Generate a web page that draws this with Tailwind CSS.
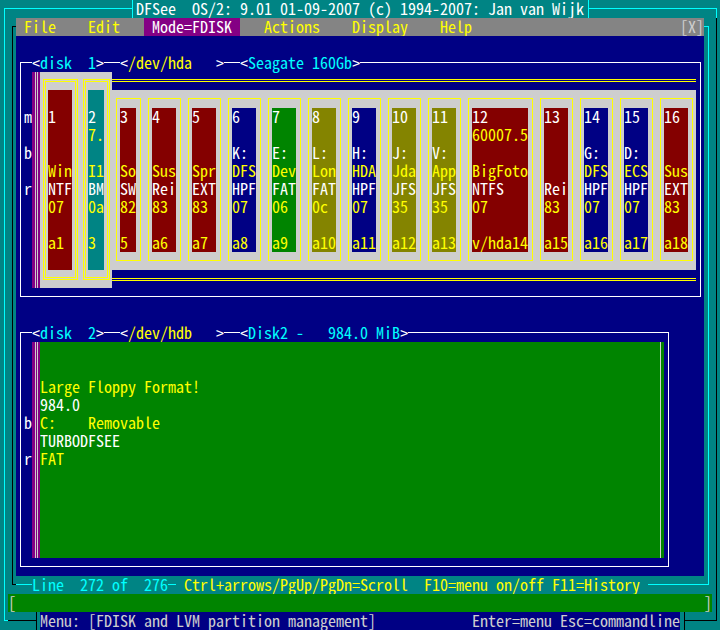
<!DOCTYPE html>
<html lang="en">
<head>
    <meta charset="UTF-8">
    <meta name="viewport" content="width=device-width, initial-scale=1.0">
    <title>DFSee OS/2</title>
    <script src="https://cdn.jsdelivr.net/npm/@tailwindcss/browser@4"></script>
</head>
<body class="min-h-screen flex flex-col bg-[#008484] text-white text-base leading-4 font-['Noto_Sans_Mono_CJK_SC','Liberation_Mono',monospace]">

    <!-- Title bar -->
    <header class="flex h-[18px] ml-1 mr-[3px]">
        <div class="flex-1 mt-2 border-t border-l border-[#00ffff]"></div>
        <h1 class="border-x border-[#00ffff] pl-[3px] pr-1 whitespace-pre">DFSee  OS/2: 9.01 01-09-2007 (c) 1994-2007: Jan van Wijk</h1>
        <div class="flex-1 mt-2 border-t border-r border-[#00ffff]"></div>
    </header>

    <div class="flex-1 flex flex-col ml-1 mr-[3px] border-l border-l-[#00ffff] border-r border-r-black">
        <div class="flex-1 flex px-[7px]">
            <div class="w-1 mt-2 border-t border-l border-black"></div>

            <div class="flex-1 flex flex-col min-w-0">
                <nav class="flex gap-4 bg-[#848484] text-[#ffff00]">
                    <button class="px-2 pb-[2px]">File</button>
                    <button class="px-2 pb-[2px]">Edit</button>
                    <button class="px-2 pb-[2px] bg-[#840084] text-white">Mode=FDISK</button>
                    <button class="px-2 pb-[2px]">Actions</button>
                    <button class="px-2 pb-[2px]">Display</button>
                    <button class="px-2 pb-[2px]">Help</button>
                    <button class="ml-auto pb-[2px] text-[#cecece]" aria-label="Close">[X]</button>
                </nav>

                <main class="flex-1 flex flex-col gap-[27px] bg-[#000084] pt-[18px] pb-[9px] pl-1 pr-[3px]">
                    <!-- Disk 1 -->
                    <section>
                        <div class="flex h-[18px] whitespace-pre">
                            <div class="w-3 mt-2 border-t border-l border-white"></div>
                            <h2>&lt;<span class="text-[#00ffff]">disk  1</span>&gt;</h2>
                            <div class="w-4 mt-2 border-t border-white"></div>
                            <p>&lt;<span class="text-[#ffff00]">/dev/hda   </span>&gt;</p>
                            <div class="w-4 mt-2 border-t border-white"></div>
                            <p>&lt;<span class="text-[#00ffff]">Seagate 160Gb</span>&gt;</p>
                            <div class="flex-1 mt-2 border-t border-r border-white"></div>
                        </div>
                        <div class="flex border-x border-b border-white pl-[3px] pr-1 pb-2">
                            <div class="w-2 pt-9 grid auto-rows-[18px] content-start"><span>m</span><span></span><span>b</span><span></span><span>r</span></div>
                            <div class="w-2 flex bg-[#840084] pl-[3px]"><div class="w-[3px] border-x border-[#cecece]"></div></div>
                            <div id="primary" class="flex gap-[5px] bg-[#cecece] pl-[3px] pr-[2px] pt-[7px] pb-2"></div>
                            <div class="flex-1 flex flex-col justify-between py-[7px]">
                                <div class="h-[3px] border-y border-[#ffff00]"></div>
                                <div id="logical" class="flex gap-[7px] bg-[#cecece] pl-1 pr-[3px] pt-2 pb-[9px]"></div>
                                <div class="h-[3px] border-y border-[#ffff00]"></div>
                            </div>
                        </div>
                    </section>

                    <!-- Disk 2 -->
                    <section class="mr-8">
                        <div class="flex h-[18px] whitespace-pre">
                            <div class="w-3 mt-2 border-t border-l border-white"></div>
                            <h2>&lt;<span class="text-[#00ffff]">disk  2</span>&gt;</h2>
                            <div class="w-4 mt-2 border-t border-white"></div>
                            <p>&lt;<span class="text-[#ffff00]">/dev/hdb   </span>&gt;</p>
                            <div class="w-4 mt-2 border-t border-white"></div>
                            <p>&lt;<span class="text-[#00ffff]">Disk2 -   984.0 MiB</span>&gt;</p>
                            <div class="flex-1 mt-2 border-t border-r border-white"></div>
                        </div>
                        <div class="flex border-x border-b border-white pl-[3px] pr-1 pb-2">
                            <div class="w-2 pt-[72px] grid auto-rows-[18px] content-start"><span>b</span><span></span><span>r</span></div>
                            <div class="w-2 flex bg-[#840084] pl-[3px]"><div class="w-[3px] border-x border-[#cecece]"></div></div>
                            <div class="flex-1 bg-[#008400] pr-[3px]">
                                <div class="pt-9 pb-[90px] grid auto-rows-[18px] border-r border-[#cecece] text-[#ffff00] whitespace-pre">
                                    <p>Large Floppy Format!</p>
                                    <p class="text-white">984.0</p>
                                    <p>C:    Removable</p>
                                    <p class="text-white">TURBODFSEE</p>
                                    <p>FAT</p>
                                </div>
                            </div>
                        </div>
                    </section>
                </main>
            </div>

            <div class="w-[5px] mt-2 border-t border-r border-[#00ffff]"></div>
        </div>

        <!-- Status line -->
        <div class="flex h-[18px] px-[7px] text-[#00ffff] whitespace-pre">
            <div class="w-1 h-[9px] border-l border-b border-black"></div>
            <div class="w-4 h-[9px] border-b border-[#00ffff]"></div>
            <p>Line  272 of  276</p>
            <div class="w-2 h-[9px] border-b border-[#00ffff]"></div>
            <p class="px-2 text-[#ffff00]">Ctrl+arrows/PgUp/PgDn=Scroll  F10=menu on/off F11=History</p>
            <div class="flex-1 h-[9px] border-b border-r border-[#00ffff]"></div>
        </div>

        <!-- Command line -->
        <label class="flex h-[18px] ml-[3px] mr-1 bg-[#008400] text-[#cecece]">[<input type="text" aria-label="Command" class="flex-1 min-w-0 outline-none">]</label>
    </div>

    <footer class="flex h-[18px] ml-1 mr-[3px] text-[#cecece]">
        <div class="w-1 h-[9px] border-l border-b border-[#00ffff]"></div>
        <div class="w-7 h-[9px] border-b border-black"></div>
        <div class="flex-1 flex border-x border-black pl-[3px] pr-1">
            <div class="flex-1 flex justify-between bg-[#000084]"><span>Menu: [FDISK and LVM partition management]</span><span>Enter=menu Esc=commandline</span></div>
        </div>
        <div class="w-8 h-[9px] border-b border-r border-black"></div>
    </footer>

    <script>
        const red = "bg-[#840000]", teal = "bg-[#008484]", blue = "bg-[#000084]", green = "bg-[#008400]", olive = "bg-[#848400]";

        // color, width, number, size, drive, label, filesystem, type, device
        const primary = [
            [red, "w-6", "1", "", "", "Win", "NTF", "07", "a1"],
            [teal, "w-4", "2", "7.", "", "I1", "BM", "0a", "3"],
        ];
        const logical = [
            [red, "w-4", "3", "", "", "So", "SW", "82", "5"],
            [red, "w-6", "4", "", "", "Sus", "Rei", "83", "a6"],
            [red, "w-6", "5", "", "", "Spr", "EXT", "83", "a7"],
            [blue, "w-6", "6", "", "K:", "DFS", "HPF", "07", "a8"],
            [green, "w-6", "7", "", "E:", "Dev", "FAT", "06", "a9"],
            [olive, "w-6", "8", "", "L:", "Lon", "FAT", "0c", "a10"],
            [blue, "w-6", "9", "", "H:", "HDA", "HPF", "07", "a11"],
            [olive, "w-6", "10", "", "J:", "Jda", "JFS", "35", "a12"],
            [olive, "w-6", "11", "", "V:", "App", "JFS", "35", "a13"],
            [red, "w-14", "12", "60007.5", "", "BigFoto", "NTFS", "07", "v/hda14"],
            [red, "w-6", "13", "", "", "", "Rei", "83", "a15"],
            [blue, "w-6", "14", "", "G:", "DFS", "HPF", "07", "a16"],
            [blue, "w-6", "15", "", "D:", "ECS", "HPF", "07", "a17"],
            [red, "w-6", "16", "", "", "Sus", "EXT", "83", "a18"],
        ];

        function draw(id, parts, frame, pad) {
            document.getElementById(id).innerHTML = parts.map(([color, width, num, size, drive, label, fs, type, dev]) =>
                `<div class="${frame}"><div class="grid auto-rows-[18px] text-[#ffff00] ${pad} ${color} ${width}">` +
                `<span class="text-white">${num}</span><span>${size}</span><span class="text-white">${drive}</span><span>${label}</span>` +
                `<span class="text-white">${fs}</span><span>${type}</span><span></span><span>${dev}</span></div></div>`
            ).join("");
        }

        draw("primary", primary, "border-3 border-double border-[#ffff00] pl-[2px] pr-[3px] pt-2 pb-[7px]", "py-[18px]");
        draw("logical", logical, "border border-[#ffff00] pl-[3px] pr-1 pt-[9px] pb-2", "py-0");
    </script>
</body>
</html>
